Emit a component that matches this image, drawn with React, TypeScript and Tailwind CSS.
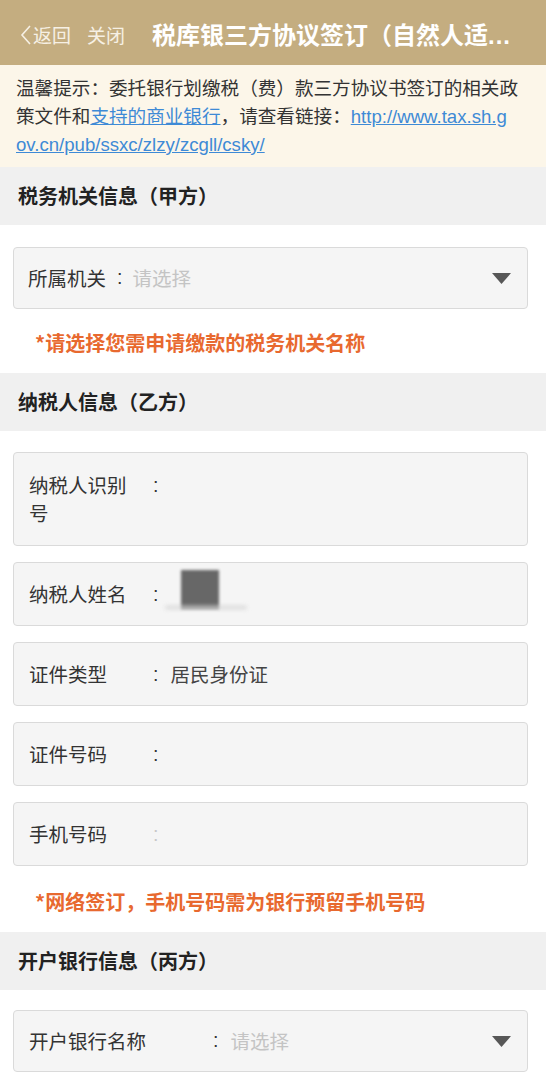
import React from 'react';

function Caret() {
  return (
    <svg width="19" height="11" viewBox="0 0 19 11" className="shrink-0">
      <polygon points="0,0 19,0 9.5,11" fill="#575757" />
    </svg>
  );
}

function SectionTitle({ children }: { children: React.ReactNode }) {
  return (
    <div className="h-[58px] bg-[#f0f0f0] px-[18px] flex items-center text-[20px] font-bold text-[#222]">
      {children}
    </div>
  );
}

function Note({ children }: { children: React.ReactNode }) {
  return <div className="pl-[35px] text-[20px] font-bold text-[#e8692f] leading-[28px]">{children}</div>;
}

type FieldProps = {
  label: string;
  labelW?: string;
  height?: string;
  colonClass?: string;
  children?: React.ReactNode;
};

function Field({ label, labelW = 'w-[110px]', height = 'h-[64px]', colonClass = 'text-[#333]', children }: FieldProps) {
  return (
    <div className={`${height} ml-[13px] mr-[18px] rounded-[4px] border border-[#dadada] bg-[#f5f5f5] pl-[15px] flex items-center`}>
      <div className="flex items-start flex-1">
        <div className={`${labelW} shrink-0 text-[19.5px] leading-[28px] text-[#333]`}>{label}</div>
        <span className={`ml-[14px] leading-[28px] font-['Liberation_Sans',sans-serif] text-[19.5px] ${colonClass}`}>:</span>
        <div className="ml-[12px] h-[28px] flex-1 flex items-center text-[19.5px] text-[#444]">{children}</div>
      </div>
    </div>
  );
}

export default function App() {
  return (
    <div className="min-h-screen bg-white font-['Noto_Sans_CJK_SC','Noto_Sans',sans-serif] text-[#333]">
      {/* title bar */}
      <div className="h-[65px] bg-[#c4ad80] flex items-center pt-[5px] pl-[20px]">
        <div className="flex items-center text-[19px] text-[#f6f0e4]">
          <svg width="12" height="22" viewBox="0 0 12 22" className="mr-[1px]">
            <polyline points="10,2 2,11 10,20" fill="none" stroke="#f6f0e4" strokeWidth="1.6" />
          </svg>
          <span>返回</span>
          <span className="ml-[16px]">关闭</span>
        </div>
        <div className="ml-[27px] text-[24px] font-bold text-white whitespace-nowrap">
          税库银三方协议签订（自然人适<span className="font-['Liberation_Sans',sans-serif] tracking-[1px]">...</span>
        </div>
      </div>

      {/* notice */}
      <div className="bg-[#fcf6e9] pl-[16px] pt-[8px] pb-[10px] text-[18.6px] leading-[28px] text-[#333] whitespace-nowrap">
        温馨提示：委托银行划缴税（费）款三方协议书签订的相关政
        <br />
        策文件和<a className="text-[#3e8ad6] underline">支持的商业银行</a>，请查看链接：
        <a className="text-[#3e8ad6] underline leading-none font-['Liberation_Sans',sans-serif]">
          http://www.tax.sh.g
          <br />
          ov.cn/pub/ssxc/zlzy/zcgll/csky/
        </a>
      </div>

      <SectionTitle>税务机关信息（甲方）</SectionTitle>

      <div className="pt-[22px] pb-[16px]">
        <div className="h-[62px] ml-[13px] mr-[18px] rounded-[4px] border border-[#dadada] bg-[#f5f5f5] pl-[14px] pr-[16px] flex items-center">
          <span className="text-[19.5px] text-[#333]">所属机关</span>
          <span className="ml-[11px] font-['Liberation_Sans',sans-serif] text-[19.5px] text-[#333]">:</span>
          <span className="ml-[10px] flex-1 text-[19.5px] text-[#c4c4c4]">请选择</span>
          <Caret />
        </div>
        <div className="mt-[20px]">
          <Note>*请选择您需申请缴款的税务机关名称</Note>
        </div>
      </div>

      <SectionTitle>纳税人信息（乙方）</SectionTitle>

      <div className="pt-[21px] pb-[16px] flex flex-col gap-[16px]">
        <Field label="纳税人识别号" height="h-[94px]" />
        <Field label="纳税人姓名">
          <div className="relative h-[28px] ml-[11px]">
            <div className="absolute left-0 top-[-10px] w-[38px] h-[39px] bg-[#676767] blur-[1.5px]" />
            <div className="absolute left-[-16px] top-[26px] w-[82px] h-[3px] rounded-full bg-[#d4d4d4] blur-[2px]" />
          </div>
        </Field>
        <Field label="证件类型">
          <span className="text-[#444]">居民身份证</span>
        </Field>
        <Field label="证件号码" />
        <Field label="手机号码" colonClass="text-[#c8c8c8]" />
        <div className="mt-[6px]">
          <Note>*网络签订，手机号码需为银行预留手机号码</Note>
        </div>
      </div>

      <SectionTitle>开户银行信息（丙方）</SectionTitle>

      <div className="pt-[20px] pb-[16px]">
        <div className="h-[62px] ml-[13px] mr-[18px] rounded-[4px] border border-[#dadada] bg-[#f5f5f5] pl-[15px] pr-[16px] flex items-center">
          <span className="w-[170px] shrink-0 text-[19.5px] text-[#333]">开户银行名称</span>
          <span className="ml-[14px] font-['Liberation_Sans',sans-serif] text-[19.5px] text-[#333]">:</span>
          <span className="ml-[12px] flex-1 text-[19.5px] text-[#c4c4c4]">请选择</span>
          <Caret />
        </div>
      </div>
    </div>
  );
}
